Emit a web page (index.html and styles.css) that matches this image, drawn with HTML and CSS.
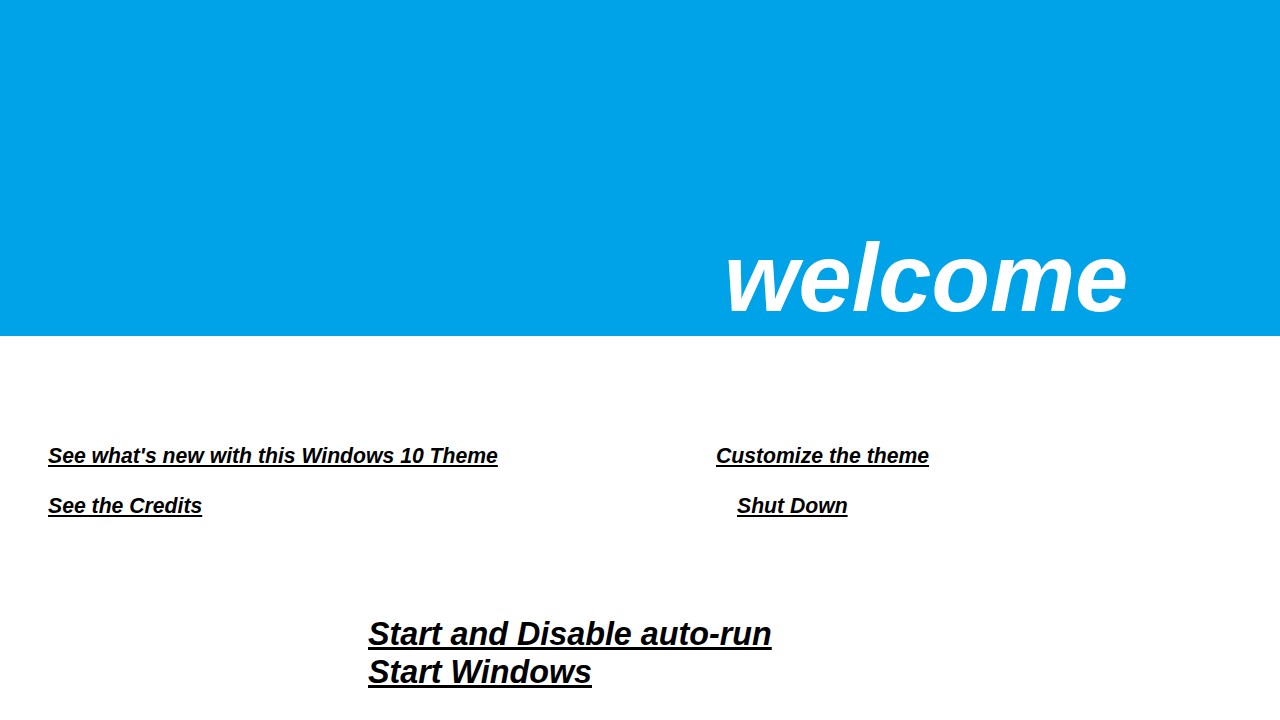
FILE: index.html
```html
<!DOCTYPE html>
<html>
<head>
<meta charset="utf-8">
<link rel="stylesheet" href="styles.css">
</head>
<body>
<header class="banner">
  <h1 class="welcome">welcome</h1>
</header>
<section class="links">
  <div class="col col-left">
    <a class="link" href="#">See what's new with this Windows 10 Theme</a>
    <a class="link" href="#">See the Credits</a>
  </div>
  <div class="col col-right">
    <a class="link" href="#">Customize the theme</a>
    <a class="link indent" href="#">Shut Down</a>
  </div>
</section>
<section class="start">
  <a class="big-link" href="#">Start and Disable auto-run</a>
  <a class="big-link" href="#">Start Windows</a>
</section>
</body>
</html>
```

FILE: styles.css
```css
html, body {
  margin: 0;
  padding: 0;
  background: #ffffff;
  font-family: "Liberation Sans", Arial, sans-serif;
}
.banner {
  height: 336px;
  background: #00a3e8;
  display: flex;
  align-items: flex-end;
  padding-left: 724px;
  padding-bottom: 3px;
  box-sizing: border-box;
}
.welcome {
  margin: 0;
  color: #ffffff;
  font-size: 95.7px;
  font-weight: bold;
  font-style: italic;
  line-height: normal;
}
.links {
  margin-top: 108px;
  padding-left: 48px;
  display: grid;
  grid-template-columns: 668px auto;
}
.col {
  display: flex;
  flex-direction: column;
  align-items: flex-start;
  gap: 26px;
}
.link {
  color: #000000;
  font-size: 21.2px;
  font-weight: bold;
  font-style: italic;
  line-height: 24px;
  text-decoration: underline;
}
.indent {
  margin-left: 21px;
}
.start {
  margin-top: 97px;
  padding-left: 368px;
  display: flex;
  flex-direction: column;
  align-items: flex-start;
}
.big-link {
  color: #000000;
  font-size: 32.3px;
  font-weight: bold;
  font-style: italic;
  line-height: 38px;
  text-decoration: underline;
}
```
